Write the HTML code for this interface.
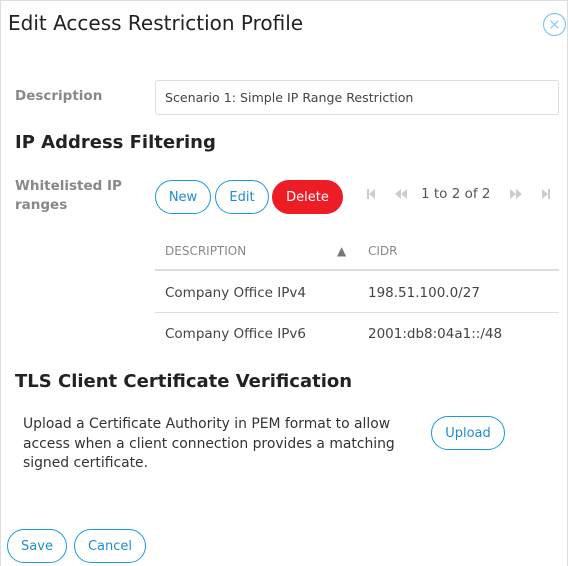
<!DOCTYPE html>
<html><head><style>
*{box-sizing:border-box;margin:0;padding:0}
body{width:568px;height:566px;overflow:hidden;background:#fff;font-family:"DejaVu Sans","Liberation Sans",sans-serif;color:#222;position:relative}
.frame{position:absolute;left:0;top:0;width:568px;height:566px;border:1px solid #ddd;border-bottom:none}
.a{position:absolute;white-space:nowrap}
.btn{position:absolute;height:34px;border:1px solid #1a9ad6;border-radius:17px;color:#1a8fd0;font-size:13px;display:flex;align-items:center;justify-content:center;background:#fff}
.lbl{color:#888;font-weight:bold;font-size:13.5px}
.h{font-weight:bold;font-size:18px;color:#222}
</style></head><body>
<div class="frame"></div>
<div class="a" style="left:8px;top:11px;font-size:20px;color:#222">Edit Access Restriction Profile</div>
<svg class="a" style="left:542px;top:12px" width="25" height="25" viewBox="0 0 25 25"><circle cx="12.5" cy="12.5" r="11" fill="none" stroke="#7fcaf0" stroke-width="1.2"/><path d="M8.5 8.5l8 8M16.5 8.5l-8 8" stroke="#7fcaf0" stroke-width="1.2"/></svg>
<div class="a lbl" style="left:15px;top:88px">Description</div>
<div class="a" style="left:155px;top:80px;width:404px;height:35px;border:1px solid #ddd;border-radius:3px;font-size:12.6px;color:#444;padding:9px 0 0 9px">Scenario 1: Simple IP Range Restriction</div>
<div class="a h" style="left:15px;top:132px">IP Address Filtering</div>
<div class="a lbl" style="left:15px;top:177px;line-height:19px">Whitelisted IP<br>ranges</div>
<div class="btn" style="left:155px;top:180px;width:56px">New</div>
<div class="btn" style="left:215px;top:180px;width:54px">Edit</div>
<div class="btn" style="left:272px;top:180px;width:71px;background:#ee1c25;border-color:#ee1c25;color:#fff">Delete</div>
<svg class="a" style="left:366px;top:188px" width="10" height="12"><rect x="1" y="1" width="2" height="10" fill="#ccc"/><path d="M9 1v10L3 6z" fill="#ccc"/></svg>
<svg class="a" style="left:394px;top:188px" width="14" height="12"><path d="M7 1v10L1 6zM13 1v10L7 6z" fill="#ccc"/></svg>
<div class="a" style="left:421px;top:186px;font-size:13.5px;color:#555">1 to 2 of 2</div>
<svg class="a" style="left:509px;top:188px" width="14" height="12"><path d="M1 1v10l6-5zM7 1v10l6-5z" fill="#ccc"/></svg>
<svg class="a" style="left:541px;top:188px" width="10" height="12"><path d="M1 1v10l6-5z" fill="#ccc"/><rect x="7" y="1" width="2" height="10" fill="#ccc"/></svg>
<div class="a" style="left:165px;top:244px;font-size:12px;color:#888">DESCRIPTION</div>
<div class="a" style="left:337px;top:244px;font-size:12px;color:#777">▲</div>
<div class="a" style="left:368px;top:244px;font-size:12px;color:#888">CIDR</div>
<div class="a" style="left:155px;top:269px;width:404px;height:2px;background:#ddd"></div>
<div class="a" style="left:165px;top:285px;font-size:13.5px;color:#444">Company Office IPv4</div>
<div class="a" style="left:368px;top:285px;font-size:13.5px;color:#444">198.51.100.0/27</div>
<div class="a" style="left:155px;top:312px;width:404px;height:1px;background:#ddd"></div>
<div class="a" style="left:165px;top:326px;font-size:13.5px;color:#444">Company Office IPv6</div>
<div class="a" style="left:368px;top:326px;font-size:13.5px;color:#444">2001:db8:04a1::/48</div>
<div class="a h" style="left:15px;top:371px">TLS Client Certificate Verification</div>
<div class="a" style="left:23px;top:415px;font-size:13.9px;color:#333;line-height:19.5px">Upload a Certificate Authority in PEM format to allow<br>access when a client connection provides a matching<br>signed certificate.</div>
<div class="btn" style="left:431px;top:416px;width:74px">Upload</div>
<div class="btn" style="left:7px;top:529px;width:60px">Save</div>
<div class="btn" style="left:74px;top:529px;width:72px">Cancel</div>
</body></html>
